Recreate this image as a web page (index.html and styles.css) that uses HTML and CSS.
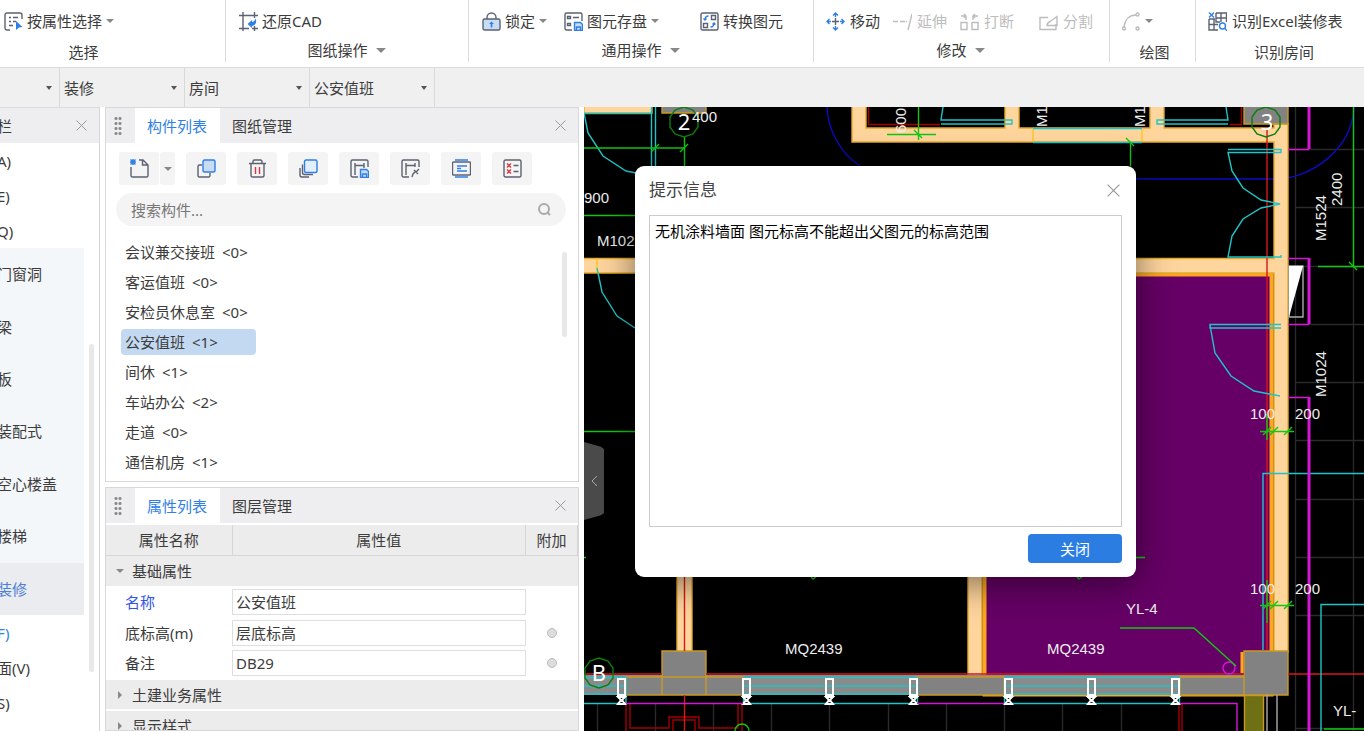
FILE: index.html
```html
<!DOCTYPE html>
<html lang="zh-CN">
<head>
  <meta charset="UTF-8" />
  <meta name="viewport" content="width=device-width, initial-scale=1" />
  <title>装修 - 房间</title>
  <link rel="stylesheet" href="styles.css">
</head>
<body>
  <!-- ribbon -->
  <header class="ribbon">
    <section class="group group-select">
      <div class="tools">
        <button class="tool">
          <svg class="icon" viewBox="0 0 19 19"><path d="M6 18H3a2 2 0 0 1-2-2V3a2 2 0 0 1 2-2h13a2 2 0 0 1 2 2v4M5 5.500h2M9 5.500h5M5 9.500h2M9 9.500h3M5 13.500h4"/><path class="blue-fill" d="M12 9l6.500 6-3.500.4-3 2.600z"/></svg>
          按属性选择<i class="caret"></i>
        </button>
      </div>
      <h2>选择</h2>
    </section>
    <section class="group group-drawing">
      <div class="tools">
        <button class="tool">
          <svg class="icon" viewBox="0 0 19 19"><path d="M0 3.500h19M4 0v19M0 16.500h10M15.500 0v6M13 16.500h6M15.500 14v5"/><path class="blue-fill" d="M8.500 12l4.500-4v2c2-.3 3-1.500 3.500-3.500 1.500 3 .500 7-3.500 7.500v2z"/></svg>
          还原CAD
        </button>
      </div>
      <h2 class="more">图纸操作<i class="caret big"></i></h2>
    </section>
    <section class="group group-common">
      <div class="tools">
        <button class="tool">
          <svg class="icon" viewBox="0 0 19 19"><path d="M5 7V5.500a4.500 4.500 0 0 1 9 0V7"/><rect class="light" x="1" y="7" width="17" height="11" rx="1.500"/><path class="blue-fill" d="M9.500 9.500l2.500 2.500h-1.700v3.500H8.700V12H7z"/></svg>
          锁定<i class="caret"></i>
        </button>
        <button class="tool">
          <svg class="icon" viewBox="0 0 19 19"><path d="M8 18H2.500A1.500 1.500 0 0 1 1 16.500v-14A1.500 1.500 0 0 1 2.500 1h14A1.500 1.500 0 0 1 18 2.500V9M3.500 4.500h3v2h-3zM9 5.500h6M3.500 11.500h3v2h-3z"/><path class="blue light" d="M10.500 10.500h6l2 2v6h-8zM12.500 18v-3h4v3"/></svg>
          图元存盘<i class="caret"></i>
        </button>
        <button class="tool wide">
          <svg class="icon" viewBox="0 0 19 19"><rect x="1" y="1" width="17" height="17" rx="1.500"/><path d="M11.500 3.500h4v4h-4zM3.500 11.500h4v4h-4z"/><path class="blue" d="M8.500 4C6 4 5 5 5 8M3.500 6.500L5 8l1.500-1.500M10.500 15c2.500 0 3.500-1 3.500-4M12.500 12.500L14 11l1.500 1.500"/></svg>
          转换图元
        </button>
      </div>
      <h2 class="more">通用操作<i class="caret big"></i></h2>
    </section>
    <section class="group group-modify">
      <div class="tools">
        <button class="tool">
          <svg class="icon" viewBox="0 0 19 19"><path d="M9.500 6v7M6 9.500h7"/><path class="blue" d="M9.500 5V1M7 3.500L9.500 1 12 3.500M9.500 14v4M7 15.500L9.500 18l2.500-2.500M5 9.500H1M3.500 7L1 9.500 3.500 12M14 9.500h4M15.500 7L18 9.500 15.500 12"/></svg>
          移动
        </button>
        <button class="tool" disabled>
          <svg class="icon" viewBox="0 0 19 19"><path d="M0 9.500h5M7 9.500h5M13 9.500h1M19 2l-4 16"/></svg>
          延伸
        </button>
        <button class="tool" disabled>
          <svg class="icon" viewBox="0 0 19 19"><path d="M1 10.500h6v7H1zM12 10.500h6v7h-6zM1 4h5M4 2l2 2-2 2M18 4h-5M15 2l-2 2 2 2M6 4v4M13 4v4"/></svg>
          打断
        </button>
        <button class="tool split" disabled>
          <svg class="icon" viewBox="0 0 19 19"><path d="M9 5.500H1v12h16V12M8 13.500c0-2 1-3 3-4l7-5v9z"/></svg>
          分割
        </button>
      </div>
      <h2 class="more">修改<i class="caret big"></i></h2>
    </section>
    <section class="group group-draw">
      <div class="tools">
        <button class="tool" disabled aria-label="弧">
          <svg class="icon" viewBox="0 0 19 19"><path d="M2 15C3 7 8 3 14 3"/><circle cx="2" cy="16.500" r="1.500"/><circle cx="15.500" cy="2.500" r="1.500"/><circle cx="15.500" cy="16.500" r="1.500"/></svg>
          <i class="caret"></i>
        </button>
      </div>
      <h2>绘图</h2>
    </section>
    <section class="group group-room">
      <div class="tools">
        <button class="tool">
          <svg class="icon" viewBox="0 0 19 19"><path d="M8 1h10.500v9M8 6h10.500M13 1v9M1 7v11h9M1 12.500h9M6 7v11M1 7h6M8 1v9h4"/><path class="blue" d="M1 .500l5 5M6 .500l-5 5"/><circle class="blue" cx="14.500" cy="14" r="3"/><path class="blue" d="M16.700 16.200l2.300 2.500"/></svg>
          识别Excel装修表
        </button>
      </div>
      <h2>识别房间</h2>
    </section>
  </header>

  <!-- floor / type selectors -->
  <div class="selectors">
    <span class="select first"><select aria-label="楼层"><option></option></select></span>
    <span class="select"><select aria-label="专业"><option>装修</option></select></span>
    <span class="select"><select aria-label="类型"><option>房间</option></select></span>
    <span class="select"><select aria-label="构件"><option>公安值班</option></select></span>
  </div>

  <main class="workspace">
    <nav class="nav">
      <div class="nav-head"><span>栏</span>
        <button class="close" aria-label="关闭导航栏"><svg viewBox="0 0 11 11"><path d="M.500.500l10 10M10.500.500l-10 10"/></svg></button>
      </div>
      <a href="#">A)</a>
      <a href="#">E)</a>
      <a href="#">Q)</a>
      <div class="nav-sub">
        <a href="#">门窗洞</a>
        <a href="#">梁</a>
        <a href="#">板</a>
        <a href="#">装配式</a>
        <a href="#">空心楼盖</a>
        <a href="#">楼梯</a>
        <a href="#" class="active">装修</a>
      </div>
      <a href="#" class="current">F)</a>
      <a href="#">面(V)</a>
      <a href="#">S)</a>
      <div class="thumb"></div>
    </nav>

    <div class="panels">
      <section class="panel">
        <div class="tabs">
          <span class="grip"></span>
          <button class="tab on">构件列表</button>
          <button class="tab">图纸管理</button>
          <button class="close" aria-label="关闭构件列表"><svg viewBox="0 0 11 11"><path d="M.500.500l10 10M10.500.500l-10 10"/></svg></button>
        </div>
        <div class="toolbar">
          <div class="pair">
            <button aria-label="新建"><svg class="icon" viewBox="0 0 19 19"><path d="M1 8v8.500A1.500 1.500 0 0 0 2.500 18h14a1.500 1.500 0 0 0 1.500-1.500V6l-5-5H9M12.500 1v5H18"/><path class="blue" d="M0 3h6M3 0v6M.500.500l5 5M5.500.500l-5 5"/></svg></button>
            <button class="drop" aria-label="新建选项"><i class="caret"></i></button>
          </div>
          <button aria-label="复制"><svg class="icon" viewBox="0 0 19 19"><path d="M5 6H2.500A1.500 1.500 0 0 0 1 7.500v9A1.500 1.500 0 0 0 2.500 18h9a1.500 1.500 0 0 0 1.500-1.500V14"/><rect class="blue light" x="6" y="1" width="12" height="12" rx="1.500"/></svg></button>
          <button aria-label="删除"><svg class="icon" viewBox="0 0 19 19"><path d="M1 4.500h17M5 4V2.500A1.500 1.500 0 0 1 6.500 1h6A1.500 1.500 0 0 1 14 2.500V4M3 4.500v12A1.500 1.500 0 0 0 4.500 18h10a1.500 1.500 0 0 0 1.500-1.500v-12"/><path class="red" d="M7.500 8v7M11.500 8v7"/></svg></button>
          <button aria-label="层间复制"><svg class="icon" viewBox="0 0 19 19"><path d="M3.500 5.500v8a2 2 0 0 0 2 2H14M1 9v7a2 2 0 0 0 2 2h7"/><rect class="blue pale" x="5.500" y="1" width="12.500" height="12.500" rx="1.500"/></svg></button>
          <button aria-label="构件存盘"><svg class="icon" viewBox="0 0 19 19"><path d="M8 18H2.500A1.500 1.500 0 0 1 1 16.500v-14A1.500 1.500 0 0 1 2.500 1h14A1.500 1.500 0 0 1 18 2.500V8M5 4v12M5 6.500h9M14 4v5"/><path class="blue light" d="M10.500 10.500h6l2 2v6h-8zM12.500 18v-3h4v3"/></svg></button>
          <button aria-label="提取构件"><svg class="icon" viewBox="0 0 19 19"><path d="M8 18H2.500A1.500 1.500 0 0 1 1 16.500v-14A1.500 1.500 0 0 1 2.500 1h14A1.500 1.500 0 0 1 18 2.500V8M5 4v12M5 6.500h9M14 4v4M11 18l1-3 3-3M13 11l4 4M15 13l3-3"/></svg></button>
          <button aria-label="排序"><svg class="icon" viewBox="0 0 19 19"><rect x=".500" y="3" width="18" height="13" rx="1"/><path class="blue" d="M3 1h13M3 18h13M5 7h10M5 9.500h4M5 12h10"/></svg></button>
          <button aria-label="清理未用"><svg class="icon" viewBox="0 0 19 19"><rect x="1" y="1" width="17" height="17" rx="1.500"/><path d="M10.500 6.500h5M10.500 12.500h5"/><path class="red" d="M4 4.500l4 4M8 4.500l-4 4M4 10.500l4 4M8 10.500l-4 4"/></svg></button>
        </div>
        <label class="search">
          <input type="text" placeholder="搜索构件..." aria-label="搜索构件">
          <svg viewBox="0 0 13 13"><circle cx="6" cy="6" r="5"/><path d="M9.500 9.500L12 12"/></svg>
        </label>
        <ul class="components">
          <li>会议兼交接班 <span>&lt;0&gt;</span></li>
          <li>客运值班 <span>&lt;0&gt;</span></li>
          <li>安检员休息室 <span>&lt;0&gt;</span></li>
          <li class="selected">公安值班 <span>&lt;1&gt;</span></li>
          <li>间休 <span>&lt;1&gt;</span></li>
          <li>车站办公 <span>&lt;2&gt;</span></li>
          <li>走道 <span>&lt;0&gt;</span></li>
          <li>通信机房 <span>&lt;1&gt;</span></li>
        </ul>
        <div class="thumb"></div>
      </section>

      <section class="panel props">
        <div class="tabs">
          <span class="grip"></span>
          <button class="tab on">属性列表</button>
          <button class="tab">图层管理</button>
          <button class="close" aria-label="关闭属性列表"><svg viewBox="0 0 11 11"><path d="M.500.500l10 10M10.500.500l-10 10"/></svg></button>
        </div>
        <table>
          <thead>
            <tr><th class="col-name">属性名称</th><th>属性值</th><th class="col-extra">附加</th></tr>
          </thead>
          <tbody>
            <tr class="section"><td colspan="3"><i class="caret"></i>基础属性</td></tr>
            <tr>
              <td><label class="key" for="p-name">名称</label></td>
              <td><input type="text" id="p-name" value="公安值班"></td>
              <td></td>
            </tr>
            <tr>
              <td><label for="p-bottom">底标高(m)</label></td>
              <td><input type="text" id="p-bottom" value="层底标高"></td>
              <td><input type="checkbox" aria-label="底标高附加"></td>
            </tr>
            <tr>
              <td><label for="p-note">备注</label></td>
              <td><input type="text" id="p-note" value="DB29"></td>
              <td><input type="checkbox" aria-label="备注附加"></td>
            </tr>
            <tr class="section closed"><td colspan="3"><i class="caret"></i>土建业务属性</td></tr>
            <tr class="section closed"><td colspan="3"><i class="caret"></i>显示样式</td></tr>
          </tbody>
        </table>
      </section>
    </div>

    <!-- drawing area -->
    <div class="canvas">
      <svg class="cad" aria-label="平面图">
        <defs>
          <polygon id="axis" points="0,-15 9,-12 14,-5 14,5 9,12 0,15 -9,12 -14,5 -14,-5 -9,-12"/>
          <g id="mullion"><rect x="-3" y="679" width="7" height="16"/><path d="M-3 697h7l-3 3 3 4h-7l3-4z"/></g>
          <path id="tick" d="M-4 4L4-4"/>
        </defs>
        <g transform="translate(-584 -107)">
          <path class="grid" d="M1295.500 107V731M1353.500 107V731M1288 149.500H1364M1295 207.500H1364M1295 266.500H1364M1295 324.500H1364M1295 382.500H1364M1295 440.500H1364M1295 499.500H1364M1295 557.500H1364M1295 615.500H1364M1295 728.500H1364M597.500 704V731M655.500 704V731M713.500 704V731M771.500 704V731M829.500 704V731M888.500 704V731M946.500 704V731M1004.500 704V731M1062.500 704V731M1121.500 704V731"/>

          <!-- room fill -->
          <rect class="room" x="984.500" y="274.500" width="287" height="420"/>
          <path class="blue-line" d="M827 107C828 130 840 153 860 166M1136 179H1275C1310 179 1352 150 1354 107"/>

          <!-- walls -->
          <path class="wall" d="M584 100H652V113H584zM852 100V142H1274V258.500H1130V273H1274V652H1288V124H1274V128H1164V100H1150V128H1019V100H1005V128H866V100zM580 258.500H640V273H580zM677 570H692V652H677zM968 570H982V690H968z"/>
          <path class="wall-line" d="M597 258V273M1033 128V142M1142 128V142"/>
          <path class="beam" d="M584 675H1244V695H584z"/>
          <path class="column" d="M662 100H706V113H662zM1244 100H1288V124H1244zM626 677H743V695H626zM917 677H1004V695H917zM1180 677H1244V695H1180zM662 651H706V695H662zM1244 651H1288V695H1244z"/>
          <path class="accent" d="M1242 652V673"/>
          <rect class="olive" x="1244.500" y="695.500" width="19" height="40"/>
          <path class="grey-line" d="M1267 695V731M1277 695V731M1289 266H1303V317H1289z"/>
          <polygon class="white-fill" points="1289,266 1303,266 1289,317"/>

          <path class="dark-red" d="M868.500 107V124.500H940M1230 124.500H1241.500V107M626 704V731M630 704V728H669V717H699V728H738V704M742 704V731M673 731V720H695V731M1179 704V731M1182 704V731"/>
          <path class="red-line" d="M584 674H662M706 674H1244M1288 674H1364M1267 130V650M684.500 577V651M684.500 695V731"/>

          <!-- doors and windows -->
          <path class="cyan" d="M584 113.500H652M651.500 107V166M655.500 107V166M584 113L588 133 603 156 626 171 636 173M597 268L602 292 617 316 635 328"/>
          <path class="cyan" d="M943 107L941 120H1012V124H941M1226 107L1228 120H1157V124H1228M1033 128.500H1142M1033 142.500H1142"/>
          <path class="cyan" d="M1228 149.500H1281V152.500H1228L1232 171 1243 188 1261 200 1280 204 1261 208 1243 219 1232 236 1228 257H1281V255"/>
          <path class="cyan" d="M1281 324.500H1210V328H1281M1210 325L1215 353 1231 376 1254 391 1280 396"/>
          <path class="cyan" d="M1263 650V473.500H1364M1321 731V604.500H1364"/>
          <path class="cyan" d="M584 677.500H626V703.500H584M584 686H626M584 694H626M743 677.500H917M743 686H917M743 694H917M743 703.500H917M1004 677.500H1180M1004 686H1180M1004 694H1180M1004 703.500H1180M743.500 677V703M917.500 677V703M1004.500 677V703M1179.500 677V703"/>
          <g class="mullion">
            <use href="#mullion" x="621"/><use href="#mullion" x="746"/><use href="#mullion" x="829"/>
            <use href="#mullion" x="913"/><use href="#mullion" x="1008"/><use href="#mullion" x="1091"/><use href="#mullion" x="1175"/>
          </g>
          <path class="magenta thick" d="M1309 107V149M1309 258V324M1309 397V731"/>
          <path class="magenta" d="M1288 149.500H1309M1288 258.500H1309M1288 324.500H1309M1288 397.500H1309M626 703.500H743M917 703.500H1004M1180 703.500H1237V731"/>
          <circle class="magenta" cx="1229" cy="668" r="6"/>

          <!-- dimensions -->
          <path class="green" d="M584 148H684M684.500 137V166M584 215.500H640M584 431.500H640M584 557.500H586M887 134.500H936M918.500 107V140M1130.500 142V166M1353.500 107V266M1318 266.500H1364M1260 431.500H1294M1267 414V440M1260 605.500H1294M1267 580V623M1130 557.500H1145M1120 628H1194L1236 666M1324 729H1364M811 577l2 2 3-2M1077 577l2 2 3-2"/>
          <g class="green">
            <use href="#tick" x="655" y="148"/><use href="#tick" x="684" y="148"/>
            <use href="#tick" x="1267" y="431"/><use href="#tick" x="1274" y="431"/><use href="#tick" x="1288" y="431"/>
            <use href="#tick" x="1267" y="605"/><use href="#tick" x="1274" y="605"/><use href="#tick" x="1288" y="605"/>
            <path d="M914 130l8 8M1126 138l8 8M1349 262l8 8"/>
            <circle cx="742" cy="731" r="7"/>
          </g>
          <g class="axis">
            <use href="#axis" x="684" y="122"/><use href="#axis" x="1266" y="122"/><use href="#axis" x="599" y="673"/>
          </g>

          <g class="axis-text">
            <text x="684" y="130">2</text>
            <text x="1267" y="130">3</text>
            <text x="599" y="681">B</text>
          </g>
          <g class="label">
            <text x="692" y="122">400</text>
            <text x="584" y="203">900</text>
            <text x="597" y="246">M102</text>
            <text x="785" y="654">MQ2439</text>
            <text x="1047" y="654">MQ2439</text>
            <text x="1126" y="614">YL-4</text>
            <text x="1333" y="716">YL-</text>
            <text x="1250" y="419">100</text>
            <text x="1295" y="419">200</text>
            <text x="1250" y="594">100</text>
            <text x="1295" y="594">200</text>
            <text transform="translate(906 133) rotate(-90)">600</text>
            <text transform="translate(1047 127) rotate(-90)">M1</text>
            <text transform="translate(1145 127) rotate(-90)">M1</text>
            <text transform="translate(1326 241) rotate(-90)">M1524</text>
            <text transform="translate(1342 206) rotate(-90)">2400</text>
            <text transform="translate(1326 397) rotate(-90)">M1024</text>
          </g>
        </g>
      </svg>

      <button class="handle" aria-label="收起面板"><svg viewBox="0 0 7 12"><path d="M6 1L1 6l5 5"/></svg></button>

      <div class="dialog" role="dialog" aria-labelledby="dlg-title">
        <div class="dialog-head">
          <h1 id="dlg-title">提示信息</h1>
          <button class="close" aria-label="关闭提示"><svg viewBox="0 0 11 11"><path d="M.500.500l10 10M10.500.500l-10 10"/></svg></button>
        </div>
        <textarea readonly aria-label="提示内容">无机涂料墙面 图元标高不能超出父图元的标高范围</textarea>
        <button class="primary">关闭</button>
      </div>
    </div>
  </main>
</body>
</html>
```
FILE: styles.css
```css
* {
  box-sizing: border-box;
}
body {
  margin: 0;
  height: 100vh;
  display: flex;
  flex-direction: column;
  overflow: hidden;
  background: #fff;
  color: #3c3c3c;
  font-family: "Noto Sans", "Noto Sans CJK SC", sans-serif;
  font-size: 15px;
  line-height: 20px;
}
button, input, select, textarea {
  font: inherit;
  color: inherit;
  margin: 0;
  padding: 0;
  border: none;
  background: none;
}
a {
  color: inherit;
  text-decoration: none;
}
svg {
  fill: none;
}
.icon {
  width: 19px;
  height: 19px;
  stroke: #5b6272;
  stroke-width: 1.4;
}
.icon .blue {
  stroke: #2f7fe6;
}
.icon .red {
  stroke: #d9363e;
}
.icon .light {
  fill: #c9dcf5;
}
.icon .pale {
  fill: #e3effd;
}
.icon .blue-fill {
  fill: #2f7fe6;
  stroke: none;
}
.caret {
  display: inline-block;
  border: 4px solid transparent;
  border-top-color: #888;
  border-bottom: none;
}
.caret.big {
  border-width: 5px;
  border-bottom: none;
}
.close {
  display: flex;
  padding: 4px;
}
.close svg {
  width: 11px;
  height: 11px;
  stroke: #999;
}

/* ribbon */
.ribbon {
  display: flex;
  flex: none;
  height: 68px;
  border-bottom: 1px solid #dcdcdc;
  white-space: nowrap;
}
.group {
  flex: none;
  height: 62px;
  padding: 11px 0 0 13px;
  border-right: 1px solid #dcdcdc;
}
.group h2 {
  display: flex;
  align-items: center;
  justify-content: center;
  gap: 8px;
  margin: 11px 14px 0 0;
  font-size: 15px;
  font-weight: normal;
}
.group h2.more {
  margin-top: 9px;
}
.group-select {
  width: 226px;
  padding-left: 4px;
}
.group.group-select h2 {
  margin-right: 62px;
}
.group-drawing {
  width: 243px;
}
.group-common {
  width: 345px;
}
.group-modify {
  width: 296px;
  padding-left: 12px;
}
.group-draw {
  width: 86px;
  padding-left: 12px;
}
.group.group-draw h2 {
  margin-right: 8px;
}
.group-room {
  flex: 1;
  padding-left: 12px;
  border-right: none;
}
.group.group-room h2 {
  margin-right: 4px;
}
.tools {
  display: flex;
  gap: 13px;
}
.tool {
  display: flex;
  align-items: center;
  gap: 4px;
  height: 20px;
}
.group-modify .tool,
.group-room .tool {
  gap: 5px;
}
.tool .caret {
  margin-right: 4px;
}
.tool.wide {
  margin-left: 24px;
}
.tool.split {
  margin-left: 12px;
}
.tool:disabled {
  color: #bdbdbd;
}
.tool:disabled .icon {
  stroke: #bdbdbd;
}

/* selectors */
.selectors {
  display: flex;
  flex: none;
  height: 39px;
  background: #f0f0f0;
}
.select {
  position: relative;
  width: 125px;
  border-right: 1px solid #d9d9d9;
}
.select.first {
  width: 60px;
}
.select select {
  width: 100%;
  height: 100%;
  padding-left: 4px;
  appearance: none;
}
.select::after {
  content: "";
  position: absolute;
  right: 7px;
  top: 18px;
  border: 3px solid transparent;
  border-top: 4px solid #555;
  border-bottom: none;
  pointer-events: none;
}

.workspace {
  flex: 1;
  min-height: 0;
  display: flex;
}

/* navigation */
.nav {
  position: relative;
  flex: none;
  width: 100px;
  overflow: hidden;
  border-right: 1px solid #d6d6d6;
}
.nav-head {
  display: flex;
  align-items: center;
  justify-content: space-between;
  height: 36px;
  padding-right: 8px;
  background: #eeeef0;
  border-top: 1px solid #dcdcdc;
  text-indent: -3px;
}
.nav a {
  display: flex;
  align-items: center;
  height: 35px;
  text-indent: -3px;
}
.nav-sub {
  display: flex;
  flex-direction: column;
  width: 84px;
  height: 367px;
  background: #f4f7fa;
}
.nav-sub a {
  flex: 1;
}
.nav a.active {
  background: #eaecf0;
  color: #4f80d8;
}
.nav a.current {
  color: #2f86e0;
}
.thumb {
  position: absolute;
  width: 5px;
  border-radius: 3px;
  background: #e8e8e8;
}
.nav .thumb {
  right: 5px;
  top: 237px;
  height: 328px;
}

/* panels */
.panels {
  flex: none;
  display: flex;
  flex-direction: column;
  gap: 5px;
  width: 474px;
  margin: 0 5px;
}
.panel {
  position: relative;
  flex: none;
  border: 1px solid #d8d8d8;
}
.panel.props {
  flex: 1;
  min-height: 0;
  overflow: hidden;
}
.panel .thumb {
  right: 11px;
  top: 144px;
  height: 85px;
}
.tabs {
  display: flex;
  align-items: center;
  height: 35px;
  padding-right: 8px;
  background: #eeeef0;
}
.tabs .close {
  margin-left: auto;
}
.grip {
  width: 8px;
  height: 20px;
  margin: 0 13px 0 8px;
  background: radial-gradient(circle, #888 1px, transparent 2px) 0 0 / 4px 5px;
}
.tab {
  height: 35px;
  padding: 0 13px 0 12px;
}
.tab.on {
  background: #fff;
  color: #2f7fe6;
}
.toolbar {
  display: flex;
  gap: 11px;
  padding: 9px 13px 8px;
}
.toolbar button {
  display: flex;
  align-items: center;
  justify-content: center;
  width: 40px;
  height: 33px;
  border-radius: 3px;
  background: #f4f4f4;
}
.pair {
  display: flex;
  gap: 1px;
}
.toolbar .drop {
  width: 15px;
}
.search {
  display: flex;
  align-items: center;
  height: 33px;
  margin: 0 12px 0 10px;
  padding: 0 15px;
  border-radius: 17px;
  background: #f4f4f4;
}
.search input {
  flex: 1;
  outline: none;
}
.search input::placeholder {
  color: #777;
}
.search svg {
  width: 13px;
  height: 13px;
  stroke: #aaa;
  stroke-width: 2;
}
.components {
  display: flex;
  flex-direction: column;
  gap: 4px;
  margin: 0;
  padding: 13px 15px 6px;
  list-style: none;
}
.components li {
  display: flex;
  gap: 7px;
  width: 135px;
  padding: 3px 4px;
  border-radius: 4px;
  white-space: nowrap;
}
.components .selected {
  background: #c2d9f1;
}

/* property table */
table {
  width: 100%;
  margin-top: 2px;
  border-collapse: collapse;
  table-layout: fixed;
}
th {
  height: 30px;
  padding: 0;
  background: #ececec;
  border-right: 1px solid #d6d6d6;
  border-bottom: 1px solid #d6d6d6;
  font-weight: normal;
}
.col-name {
  width: 126px;
}
.col-extra {
  width: 52px;
}
td {
  height: 31px;
  padding: 0;
}
td:first-child {
  padding-left: 19px;
}
td:last-child {
  text-align: center;
}
.key {
  color: #2f54eb;
}
tr.section td {
  background: #ececec;
  border-bottom: 1px solid #fff;
  text-align: left;
  padding-left: 10px;
}
tr.section.closed td {
  border-top: 2px solid #fff;
}
.section .caret {
  margin-right: 8px;
  vertical-align: 4px;
}
.closed .caret {
  border: 4px solid transparent;
  border-left-color: #888;
  border-right: none;
  margin: 0 10px 0 2px;
  vertical-align: 2px;
}
td input[type="text"] {
  display: block;
  width: 100%;
  height: 26px;
  padding: 0 3px;
  border: 1px solid #dedede;
  background: #fff;
}
td input[type="checkbox"] {
  appearance: none;
  display: block;
  width: 10px;
  height: 10px;
  margin: 0 auto;
  border: 1px solid #bbb;
  border-radius: 50%;
  background: #dcdcdc;
}

/* drawing */
.canvas {
  position: relative;
  flex: 1;
  min-width: 0;
  overflow: hidden;
  background: #000;
}
.cad {
  display: block;
  width: 100%;
  height: 100%;
  stroke-width: 1.4;
}
.grid { stroke: #2a2a2a; }
.room { fill: #660066; stroke: #ffa51f; stroke-width: 4; }
.wall { fill: #ffd59e; stroke: #e5ab2c; }
.wall-line { stroke: #ffc527; }
.beam { fill: #8a8a8a; }
.column { fill: #828282; stroke: #c99a22; }
.accent { stroke: #ffa51f; stroke-width: 3; }
.olive { fill: #6f6f16; stroke: #c99a22; }
.grey-line { stroke: #aaa; }
.white-fill { fill: #fff; }
.dark-red { stroke: #a30000; }
.red-line { stroke: #d81818; }
.cyan { stroke: #1fc4c8; }
.blue-line { stroke: #0b0bc4; }
.magenta { stroke: #d615d6; }
.magenta.thick { stroke-width: 3; }
.green { stroke: #10c810; }
.axis { stroke: #0b7d0b; }
.mullion { stroke: #fff; stroke-width: 2; }
.label {
  fill: #eee;
  font-family: "Liberation Sans", sans-serif;
  font-size: 15px;
}
.axis-text {
  fill: #fff;
  font-size: 22px;
  text-anchor: middle;
}

.handle {
  position: absolute;
  left: 0;
  top: 335px;
  width: 20px;
  height: 78px;
  background: #4b4b4b;
  clip-path: polygon(0 0, 85% 6%, 100% 9%, 100% 91%, 85% 94%, 0 100%);
}
.handle svg {
  width: 7px;
  height: 12px;
  stroke: #aaa;
}

/* message dialog */
.dialog {
  position: absolute;
  left: 51px;
  top: 59px;
  width: 501px;
  display: flex;
  flex-direction: column;
  padding: 12px 14px 14px;
  border-radius: 9px;
  background: #fff;
  box-shadow: 0 6px 36px rgba(0, 0, 0, 0.5);
}
.dialog-head {
  display: flex;
  align-items: center;
  justify-content: space-between;
  height: 24px;
}
.dialog-head h1 {
  margin: 0;
  color: #444;
  font-size: 17px;
  font-weight: normal;
}
.dialog .close {
  padding: 2px;
}
.dialog .close svg {
  width: 13px;
  height: 13px;
}
.dialog textarea {
  height: 312px;
  margin-top: 13px;
  padding: 5px;
  border: 1px solid #ccc;
  color: #000;
  resize: none;
  outline: none;
}
.primary {
  align-self: flex-end;
  width: 94px;
  height: 29px;
  margin-top: 7px;
  border-radius: 4px;
  background: #2b7de1;
  color: #fff;
}
```
